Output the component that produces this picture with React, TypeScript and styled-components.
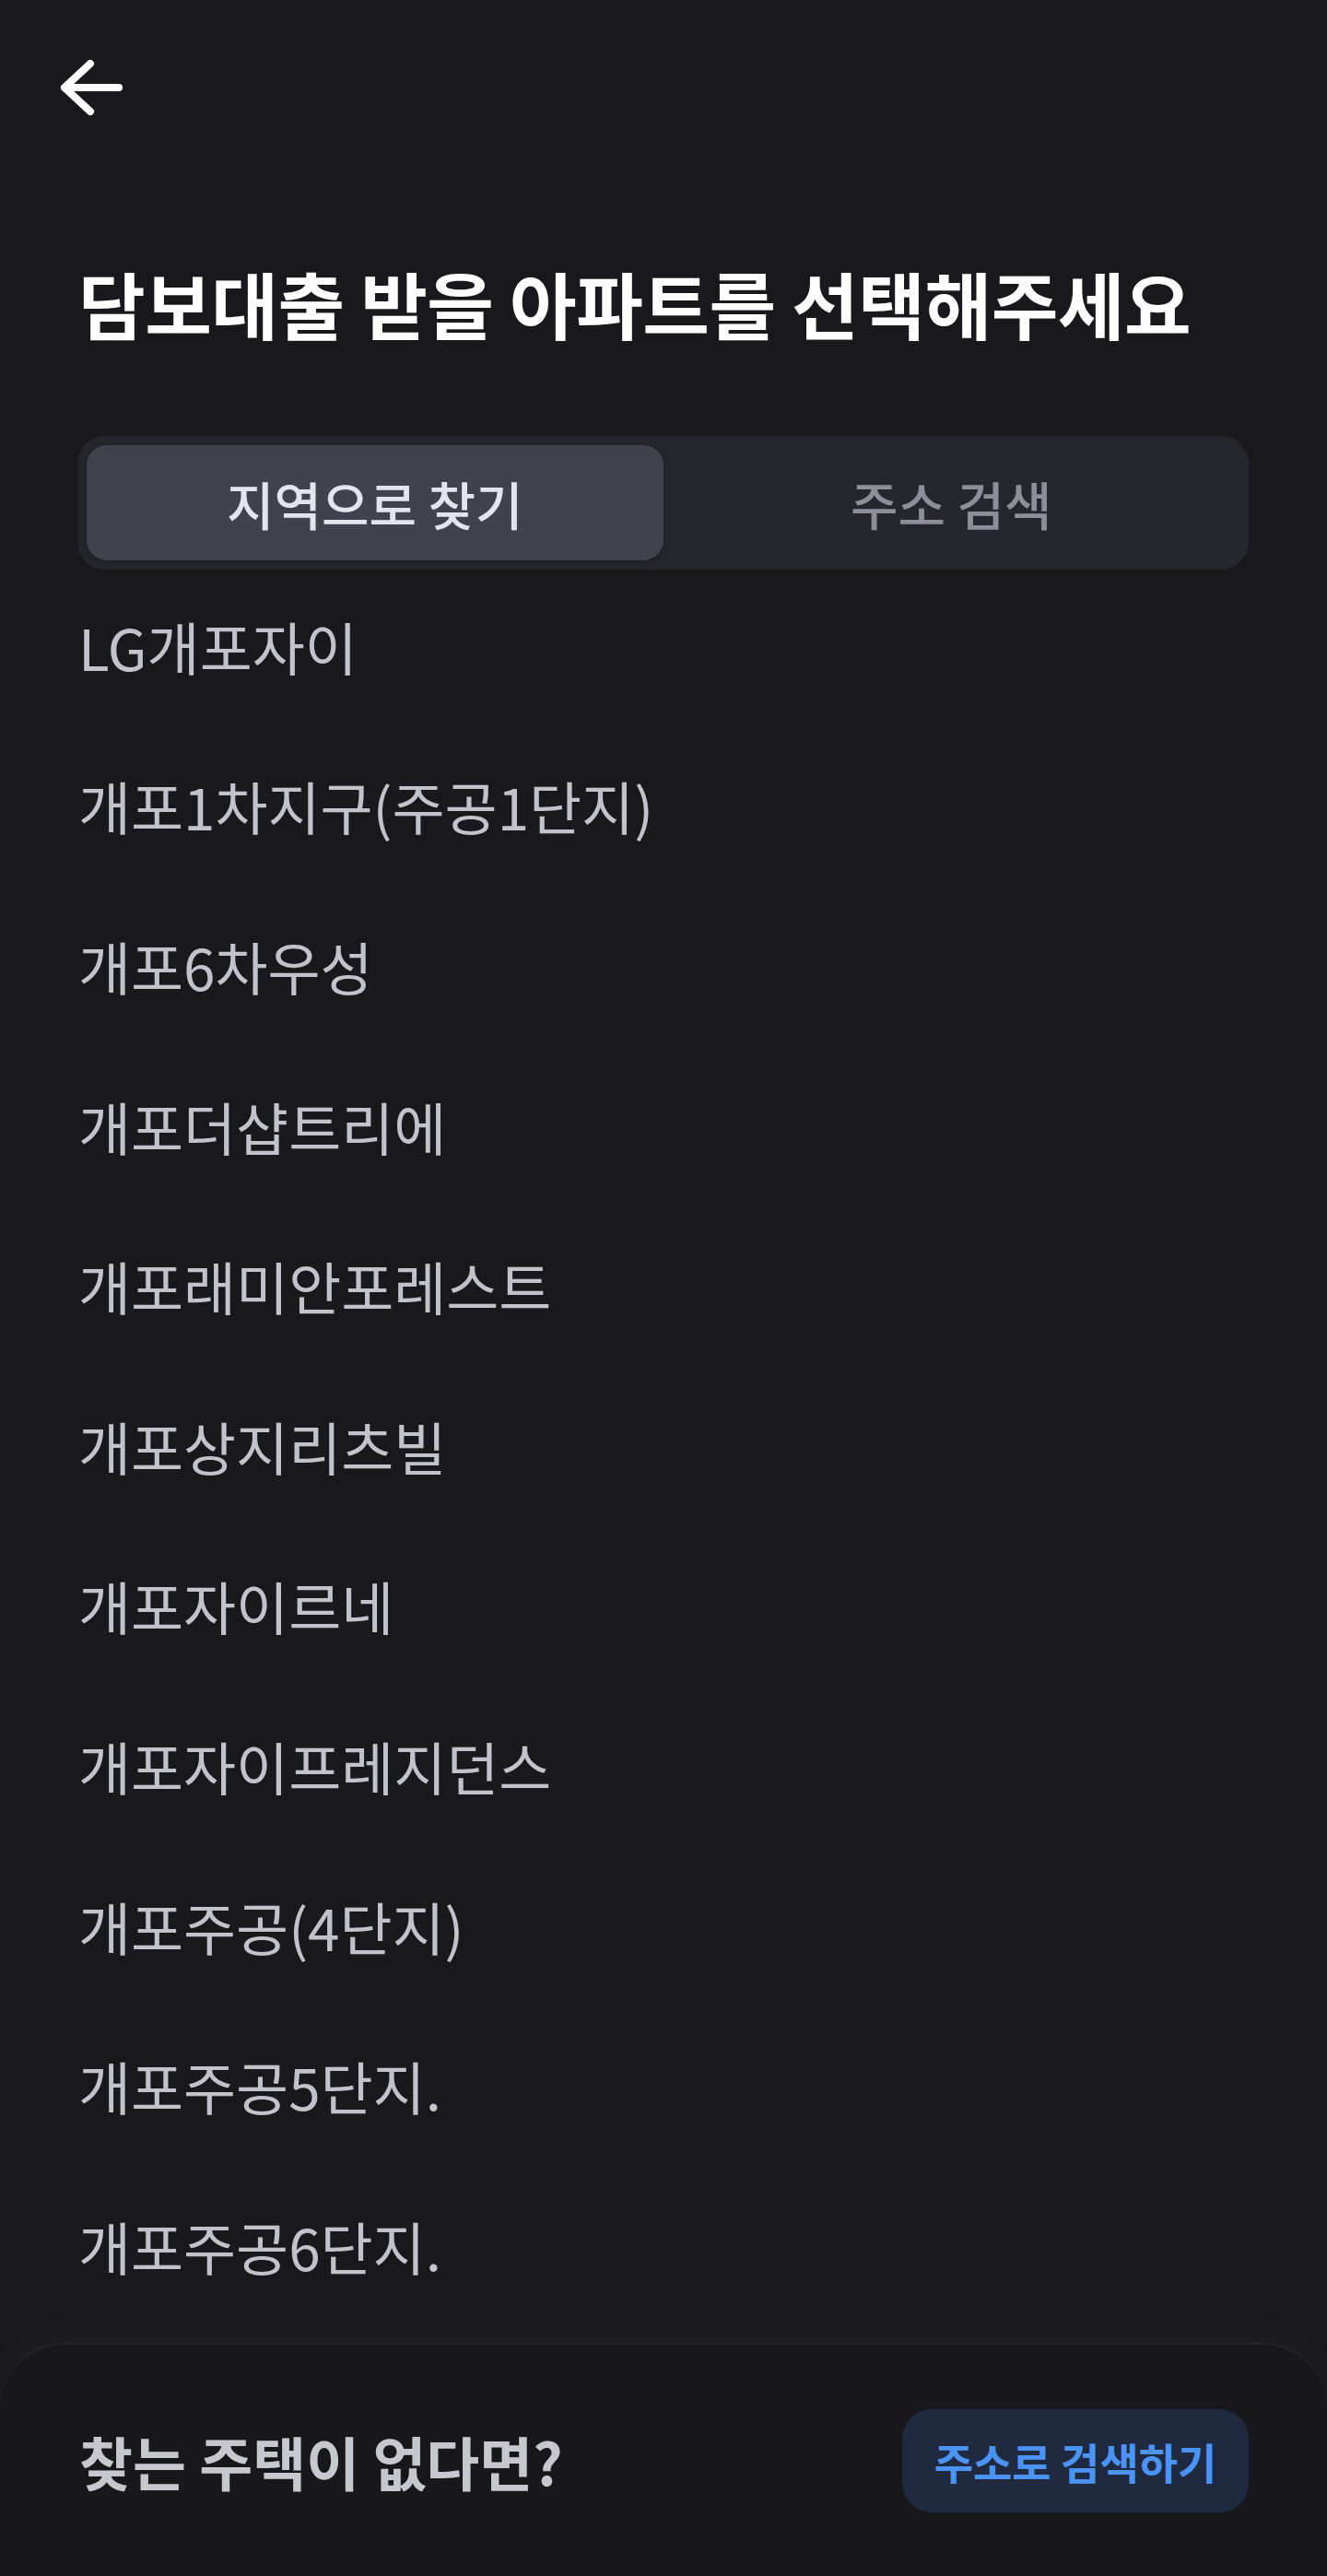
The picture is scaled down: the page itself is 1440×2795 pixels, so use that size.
import styled, { createGlobalStyle } from 'styled-components';

const APARTMENTS = [
  'LG개포자이',
  '개포1차지구(주공1단지)',
  '개포6차우성',
  '개포더샵트리에',
  '개포래미안포레스트',
  '개포상지리츠빌',
  '개포자이르네',
  '개포자이프레지던스',
  '개포주공(4단지)',
  '개포주공5단지.',
  '개포주공6단지.',
];

const GlobalStyle = createGlobalStyle`
  html, body {
    margin: 0;
    padding: 0;
    background: #18181d;
  }
  body {
    font-family: 'Noto Sans CJK KR', 'Noto Sans', sans-serif;
    -webkit-font-smoothing: antialiased;
  }
  * {
    box-sizing: border-box;
  }
`;

const BackArrow = () => (
  <svg width="80" height="80" viewBox="0 0 80 80" fill="none">
    <path
      d="M38 14 L10 40 L38 66 M10 40 H69"
      stroke="#ffffff"
      strokeWidth="8"
      strokeLinecap="round"
      strokeLinejoin="round"
    />
  </svg>
);

const App = () => {
  return (
    <Page>
      <GlobalStyle />
      <Header>
        <BackButton aria-label="back">
          <BackArrow />
        </BackButton>
      </Header>

      <Title>담보대출 받을 아파트를 선택해주세요</Title>

      <Tabs>
        <Tab $active>지역으로 찾기</Tab>
        <Tab>주소 검색</Tab>
      </Tabs>

      <List>
        {APARTMENTS.map((name) => (
          <Row key={name}>{name}</Row>
        ))}
      </List>

      <Sheet>
        <SheetText>찾는 주택이 없다면?</SheetText>
        <SearchButton>주소로 검색하기</SearchButton>
      </Sheet>
    </Page>
  );
};

export default App;

const Page = styled.div`
  width: 1440px;
  height: 2795px;
  overflow: hidden;
  display: flex;
  flex-direction: column;
  background: #18181d;
`;

const Header = styled.header`
  height: 190px;
  flex-shrink: 0;
  display: flex;
  align-items: center;
  padding-left: 60px;
`;

const BackButton = styled.button`
  display: flex;
  padding: 0;
  border: none;
  background: none;
  cursor: pointer;
`;

const Title = styled.h1`
  margin: 89px 0 0;
  padding: 0 85px;
  font-size: 79px;
  line-height: 100px;
  font-weight: 700;
  color: #ffffff;
  letter-spacing: -0.5px;
  white-space: nowrap;
`;

const Tabs = styled.div`
  margin: 94px 85px 0 84px;
  height: 145px;
  flex-shrink: 0;
  padding: 10px;
  display: grid;
  grid-template-columns: 1fr 1fr;
  border-radius: 30px;
  background: #26272d;
`;

const Tab = styled.div<{ $active?: boolean }>`
  display: flex;
  align-items: center;
  justify-content: center;
  border-radius: 22px;
  font-size: 56px;
  font-weight: 500;
  color: ${({ $active }) => ($active ? '#e4e4ec' : '#8d8f98')};
  background: ${({ $active }) => ($active ? '#41424b' : 'transparent')};
  box-shadow: ${({ $active }) => ($active ? '0 2px 8px rgba(0, 0, 0, 0.25)' : 'none')};
`;

const List = styled.ul`
  list-style: none;
  margin: -4px 0 0;
  padding: 0 85px;
`;

const Row = styled.li`
  height: 173.6px;
  display: flex;
  align-items: center;
  font-size: 62px;
  font-weight: 400;
  color: #c2c3ca;
  white-space: nowrap;
`;

const Sheet = styled.footer`
  margin-top: auto;
  height: 253px;
  flex-shrink: 0;
  display: flex;
  align-items: center;
  justify-content: space-between;
  padding: 0 85px 0 86px;
  border-top: 2px solid #24242a;
  border-radius: 70px 70px 0 0;
  background: #17171c;
  box-shadow: 0 -28px 50px rgba(255, 255, 255, 0.025);
`;

const SheetText = styled.span`
  font-size: 63px;
  font-weight: 600;
  color: #c7c8ce;
  white-space: nowrap;
`;

const SearchButton = styled.button`
  width: 376px;
  height: 112px;
  border: none;
  border-radius: 32px;
  background: #1f2a40;
  color: #4b94f5;
  font-family: inherit;
  font-size: 46px;
  font-weight: 600;
  cursor: pointer;
  white-space: nowrap;
`;
